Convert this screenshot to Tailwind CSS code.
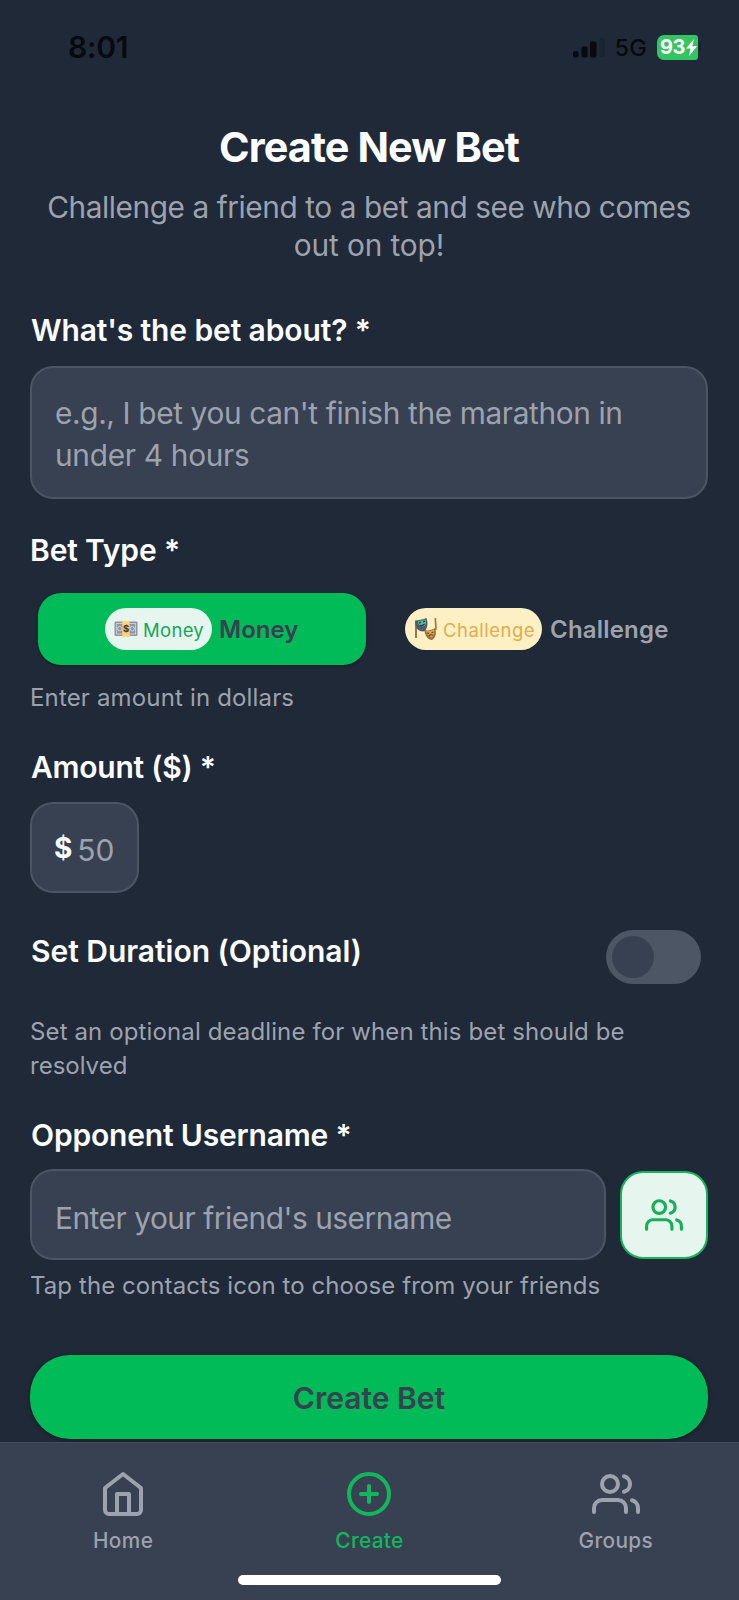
<!DOCTYPE html>
<html lang="en">
<head>
<meta charset="utf-8">
<title>Create New Bet</title>
<script src="https://cdn.jsdelivr.net/npm/@tailwindcss/browser@4"></script>
</head>
<body class="bg-[#202937]">
<div class="w-[739px] h-[1600px] flex flex-col overflow-hidden bg-[#202937] font-['Inter',sans-serif] text-[#fcfdfe] whitespace-nowrap">

  <!-- Status bar -->
  <header class="h-[122px] shrink-0 flex items-start justify-between pl-[68px] pr-[38px] pt-[32px] text-[#070a0f]">
    <div class="text-[30px] leading-[31px] font-semibold tracking-[-0.3px]">8:01</div>
    <div class="flex items-center h-[30px]">
      <svg class="w-[34px] h-[20px] mt-px" viewBox="0 0 34 20">
        <rect x="1" y="13" width="5.500" height="6.500" rx="1.800" fill="#070a0f"/>
        <rect x="9.500" y="8.500" width="6" height="11" rx="1.800" fill="#070a0f"/>
        <rect x="18" y="3.500" width="6.500" height="16" rx="1.800" fill="#070a0f"/>
        <rect x="27.500" y="0" width="5" height="19" rx="1.800" fill="#1a2330"/>
      </svg>
      <div class="ml-[9px] text-[23.500px] leading-[30px] font-medium tracking-[0.2px] mt-[2px]">5G</div>
      <div class="ml-[10px] w-[41px] h-[25px] rounded-l-[7px] rounded-r-[3px] bg-[#34c461] flex items-center pl-[3px] text-white">
        <span class="text-[20px] leading-[25px] font-bold tracking-[-0.6px]">93</span>
        <svg class="w-[11px] h-[17px] ml-px" viewBox="0 0 11 17"><path d="M8 0 0 9.500h4.600L3 17l8-9.800H6.300z" fill="#fff"/></svg>
      </div>
      <div class="ml-px w-[2px] h-[8px] rounded-r bg-[#19212d]"></div>
    </div>
  </header>

  <main class="h-[1320px] shrink-0 pl-[30px] pr-[31px] flex flex-col">
    <h1 class="text-center text-[41.400px] leading-[50px] font-bold tracking-[-0.9px]">Create New Bet</h1>
    <p class="mt-[17px] text-center text-[29.800px] leading-[37.600px] tracking-[-0.43px] text-[#9ca3af]">Challenge a friend to a bet and see who comes<br><span class="tracking-[-0.1px]">out on top!</span></p>

    <label class="mt-[47.300px] pl-px text-[30px] leading-[38px] font-[560] tracking-[-0.12px]">What's the bet about? *</label>
    <div class="mt-[16.500px] h-[133px] shrink-0 rounded-[23px] border-2 border-[#4b5563] bg-[#384151] pl-[23px] pt-[25.500px] text-[29.800px] leading-[41.400px] tracking-[-0.36px] text-[#9ca3af]">e.g., I bet you can't finish the marathon in<br><span class="tracking-[-0.28px]">under 4 hours</span></div>

    <label class="mt-[32.500px] text-[30px] leading-[38px] font-[560] tracking-[-0.15px]">Bet Type *</label>
    <div class="mt-[23.500px] flex h-[72px] shrink-0 gap-[8px] px-[8px]">
      <div class="w-[328px] shrink-0 rounded-[23px] bg-[#00bb58] shadow-[0_1px_3px_rgba(0,0,0,0.35)] flex items-center pl-[67px]">
        <div class="w-[107px] h-[42px] rounded-full bg-[#e6f6ee] flex items-center pl-[9px] text-[#16a65a]">
          <!-- Banknote -->
          <svg class="w-[24px] h-[18px]" viewBox="0 0 24 18">
            <rect x=".5" y="1.500" width="23" height="14.500" rx="1" fill="#8e96a5"/>
            <rect x="2.500" y="3.500" width="19" height="10.500" fill="none" stroke="#c9ccd2" stroke-width="1"/>
            <circle cx="5.800" cy="8.700" r="2.200" fill="none" stroke="#d5d8dc" stroke-width="1"/>
            <circle cx="18.200" cy="8.700" r="2.200" fill="none" stroke="#d5d8dc" stroke-width="1"/>
            <path d="M8.300 1h7.400v15.500l-1.800 1-1.900-1-1.900 1-1.800-1z" fill="#fbd57c"/>
            <circle cx="12" cy="8.600" r="4.200" fill="#e8bb78"/>
            <text x="12" y="12" font-size="9.500" font-weight="700" text-anchor="middle" fill="#4a3a2c" font-family="Inter">$</text>
          </svg>
          <span class="ml-[5px] mt-[2px] text-[18.500px] leading-[24px] tracking-[0.3px]">Money</span>
        </div>
        <span class="ml-[7px] mt-[2px] text-[24px] leading-[30px] font-semibold text-[#384151]">Money</span>
      </div>
      <div class="w-[328px] shrink-0 flex items-center pl-[31px]">
        <div class="w-[137px] h-[42px] rounded-full bg-[#fef0c5] flex items-center pl-[9px] text-[#e2ac4c]">
          <!-- Theatre masks -->
          <svg class="w-[24px] h-[24px]" viewBox="0 0 24 24">
            <path d="M2 4v17" stroke="#8b6a3f" stroke-width="1.800" fill="none"/>
            <path d="M21.500 1c-.8 4 1.300 8 .2 12" stroke="#b07a3a" stroke-width="1.800" fill="none"/>
            <path d="M1 3.500C4 3.500 9 2.500 12.500 1c1.400 4 1.600 9-1.500 13-4 1.500-8-1-9-4.500-.6-2-.8-4-1-6z" fill="#4c5d6d"/>
            <path d="M4 4c3 0 5-.8 7.500-1.800.8 3 .4 5-1.300 7-3 .5-5.200-1-5.900-3z" fill="#5bbd97"/>
            <path d="M5 5.800l2-.5M9 4.700l2-.6M6 8.300c1.700.5 3.500 0 4.500-1.500" stroke="#263b42" stroke-width="1.200" fill="none"/>
            <path d="M10.500 13c3.500 1 7 .3 10.500-2 1.800 4.500 1 9.500-3 12-4.500-.5-7.500-5-7.500-10z" fill="#9c7040"/>
            <path d="M12 14c2.800.4 5.500-.3 8-1.800.7 3.300 0 6.300-2.500 8.300-3-.7-5-3.300-5.500-6.500z" fill="#e5a647"/>
            <path d="M13 16l2 .3M17.500 15.800l1.800-.8M14.800 19.300c1-1.500 2.800-1.800 4-1" stroke="#59391e" stroke-width="1.200" fill="none"/>
          </svg>
          <span class="ml-[5px] mt-[2px] text-[18.500px] leading-[24px] tracking-[0.5px]">Challenge</span>
        </div>
        <span class="ml-[8px] mt-[2px] text-[24px] leading-[30px] font-semibold tracking-[0.2px] text-[#9ca3af]">Challenge</span>
      </div>
    </div>
    <p class="mt-[16.500px] text-[24px] leading-[33.800px] tracking-[0.16px] text-[#9ca3af]">Enter amount in dollars</p>

    <label class="mt-[33px] pl-px text-[30px] leading-[38px] font-[560] tracking-[-0.25px]">Amount ($) *</label>
    <div class="mt-[15.500px] w-[109px] h-[91px] shrink-0 rounded-[23px] border-2 border-[#4b5563] bg-[#384151] flex items-center pl-[22px]">
      <span class="text-[28px] leading-[38px] font-bold mt-[2px]">$</span>
      <span class="ml-[5px] text-[30px] leading-[38px] mt-[6px] text-[#9ca3af]">50</span>
    </div>

    <div class="mt-[37px] h-[54px] shrink-0 flex justify-between pr-[7px]">
      <label class="mt-[2px] pl-px text-[30px] leading-[38px] font-[560] tracking-[-0.03px]">Set Duration (Optional)</label>
      <div class="w-[95px] h-[54px] rounded-full bg-[#4d5665] flex items-center pl-[6px]">
        <div class="size-[42px] rounded-full bg-[#384151]"></div>
      </div>
    </div>
    <p class="mt-[31.500px] text-[24px] leading-[33.800px] tracking-[0.12px] text-[#9ca3af]">Set an optional deadline for when this bet should be<br><span class="tracking-normal">resolved</span></p>

    <label class="mt-[33px] pl-px text-[30px] leading-[38px] font-[560] tracking-[-0.18px]">Opponent Username *</label>
    <div class="mt-[15.500px] h-[91px] shrink-0 flex items-center justify-between">
      <div class="w-[576px] h-[91px] rounded-[23px] border-2 border-[#4b5563] bg-[#384151] flex items-center pl-[23px] pt-[7px] text-[29.800px] leading-[38px] tracking-[-0.46px] text-[#9ca3af]">Enter your friend's username</div>
      <div class="size-[88px] rounded-[23px] border-2 border-[#17b45c] bg-[#e6f6ee] flex items-center justify-center">
        <svg class="size-[38px]" viewBox="0 0 24 24" fill="none" stroke="#17ae5a" stroke-width="2" stroke-linecap="round" stroke-linejoin="round"><path d="M17 21v-2a4 4 0 0 0-4-4H5a4 4 0 0 0-4 4v2"/><circle cx="9" cy="7" r="4"/><path d="M23 21v-2a4 4 0 0 0-3-3.870"/><path d="M16 3.130a4 4 0 0 1 0 7.750"/></svg>
      </div>
    </div>
    <p class="mt-[9px] text-[24px] leading-[33.800px] tracking-[0.08px] text-[#9ca3af]">Tap the contacts icon to choose from your friends</p>

    <button class="mt-[51.500px] h-[84px] shrink-0 rounded-[40px] bg-[#00bb58] shadow-[0_1px_4px_rgba(0,0,0,0.4)] pt-[2px] text-[30px] leading-[38px] font-[560] text-[#384151]">Create Bet</button>
  </main>

  <!-- Tab bar -->
  <nav class="relative h-[158px] shrink-0 bg-[#384151] border-t border-[#434c5b] flex flex-col items-center">
    <div class="w-full grid grid-cols-3 pt-[27px] text-[20.800px] leading-[26px] font-medium text-[#9ca3af]">
      <div class="flex flex-col items-center gap-[10px]">
        <svg class="size-[48px]" viewBox="0 0 24 24" fill="none" stroke="currentColor" stroke-width="2" stroke-linecap="round" stroke-linejoin="round"><path d="M3 9l9-7 9 7v11a2 2 0 0 1-2 2H5a2 2 0 0 1-2-2z"/><path d="M9 22V12h6v10"/></svg>
        <span class="tracking-[0.4px]">Home</span>
      </div>
      <div class="flex flex-col items-center gap-[10px] text-[#12b75d]">
        <svg class="size-[48px]" viewBox="0 0 24 24" fill="none" stroke="currentColor" stroke-width="2" stroke-linecap="round" stroke-linejoin="round"><circle cx="12" cy="12" r="10"/><path d="M12 8v8M8 12h8"/></svg>
        <span class="tracking-[0.35px]">Create</span>
      </div>
      <div class="flex flex-col items-center gap-[10px]">
        <svg class="size-[48px]" viewBox="0 0 24 24" fill="none" stroke="currentColor" stroke-width="2" stroke-linecap="round" stroke-linejoin="round"><path d="M17 21v-2a4 4 0 0 0-4-4H5a4 4 0 0 0-4 4v2"/><circle cx="9" cy="7" r="4"/><path d="M23 21v-2a4 4 0 0 0-3-3.870"/><path d="M16 3.130a4 4 0 0 1 0 7.750"/></svg>
        <span class="tracking-[0.35px]">Groups</span>
      </div>
    </div>
    <div class="mt-[21px] w-[263px] h-[10px] rounded-full bg-white"></div>
  </nav>
</div>
</body>
</html>
